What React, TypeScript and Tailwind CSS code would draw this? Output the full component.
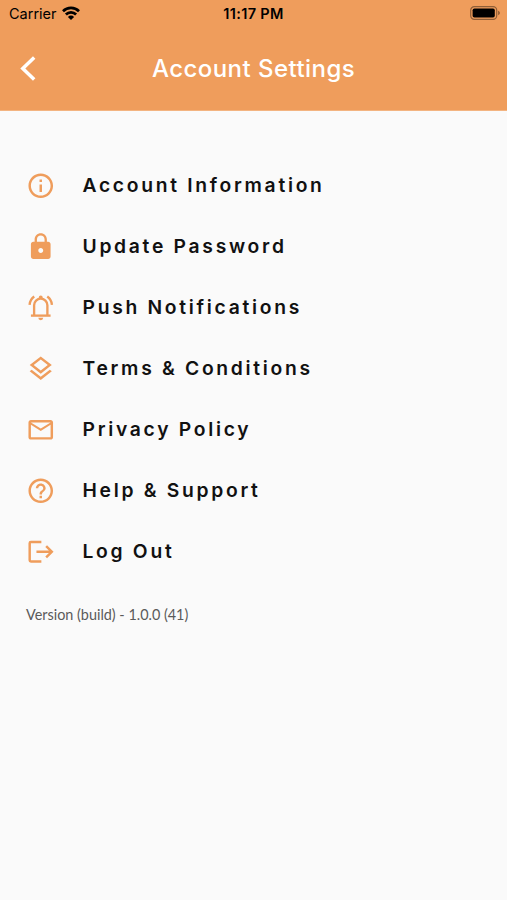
import React from 'react';
import {
    MdHelpOutline,
    MdInfoOutline,
    MdLock,
    MdMailOutline,
    MdOutlineLayers,
} from 'react-icons/md';

interface IconProps {
    size?: number | string;
    className?: string;
}

interface SettingsItem {
    label: string;
    icon: React.ComponentType<IconProps>;
}

function BellIcon({ size, className }: IconProps) {
    return (
        <svg width={size} height={size} className={className} viewBox="0 0 24 24" fill="none" stroke="currentColor" strokeWidth={1.9}>
            <path d="M6.6 18.2V10a5.4 5.4 0 0 1 10.8 0v8.2" />
            <path d="M4 18.4h16" />
            <path d="M10.4 4.8V3.7a1.6 1.6 0 0 1 3.2 0v1.1z" fill="currentColor" stroke="none" />
            <path d="M10 20.1h4a2 2 0 0 1-4 0z" fill="currentColor" stroke="none" />
            <path d="M6.7 2.9A9.2 9.2 0 0 0 2.9 9.6M17.3 2.9a9.2 9.2 0 0 1 3.8 6.7" />
        </svg>
    );
}

function LogoutIcon({ size, className }: IconProps) {
    return (
        <svg width={size} height={size} className={className} viewBox="0 0 24 24" fill="none" stroke="currentColor" strokeWidth={2}>
            <path d="M12.5 4H4a1 1 0 0 0-1 1v14a1 1 0 0 0 1 1h8.5" />
            <path d="M8.5 12h12.3M16.4 7.4 21 12l-4.6 4.6" />
        </svg>
    );
}

const items: SettingsItem[] = [
    { label: 'Account Information', icon: MdInfoOutline },
    { label: 'Update Password', icon: MdLock },
    { label: 'Push Notifications', icon: BellIcon },
    { label: 'Terms & Conditions', icon: MdOutlineLayers },
    { label: 'Privacy Policy', icon: MdMailOutline },
    { label: 'Help & Support', icon: MdHelpOutline },
    { label: 'Log Out', icon: LogoutIcon },
];

function WifiIcon() {
    return (
        <svg className="w-[18px] h-[14px] mb-[2px]" viewBox="0 0 18 14" fill="none" stroke="currentColor" strokeWidth={2.7}>
            <path d="M1 5.2a11.4 11.4 0 0 1 16 0" />
            <path d="M3.9 8.5a7.1 7.1 0 0 1 10.2 0" />
            <path d="M9 14 5.9 10.9a4.4 4.4 0 0 1 6.2 0z" fill="currentColor" stroke="none" />
        </svg>
    );
}

function BatteryIcon() {
    return (
        <svg className="w-[31px] h-[14px] mb-[1px]" viewBox="0 0 31 14">
            <rect x="0.7" y="0.7" width="26" height="12.6" rx="3.6" fill="none" stroke="#000" strokeOpacity="0.4" strokeWidth="1.2" />
            <rect x="2.6" y="2.5" width="22.2" height="9" rx="1.8" fill="#000" />
            <path d="M28.2 4.8v4.4c1-.4 1.6-1.2 1.6-2.2s-.6-1.8-1.6-2.2z" fill="#000" fillOpacity="0.45" />
        </svg>
    );
}

function StatusBar() {
    return (
        <div className="grid grid-cols-[1fr_auto_1fr] items-center h-[27px] pl-[9px] pr-[6px] text-[14.5px] leading-none text-black">
            <div className="flex items-center gap-[5px]">
                <span className="pt-px">Carrier</span>
                <WifiIcon />
            </div>
            <span className="pt-[2px] pr-[3px] font-semibold tracking-[0.35px]">11:17 PM</span>
            <div className="flex justify-end">
                <BatteryIcon />
            </div>
        </div>
    );
}

export default function App() {
    return (
        <div className="min-h-[900px] bg-[#fafafa] font-['Inter',sans-serif]">
            <header className="h-[111px] bg-[#ef9d5c] border-b border-[#f3b481]">
                <StatusBar />
                <div className="grid grid-cols-[60px_1fr_60px] items-center h-[83px]">
                    <button className="pl-[20px] text-white" aria-label="Back">
                        <svg className="w-[16px] h-[26px]" viewBox="0 0 16 26" fill="none" stroke="currentColor" strokeWidth={3.5}>
                            <path d="M14.2 1.6 2.8 12.6l11.4 11" />
                        </svg>
                    </button>
                    <h1 className="text-center text-[24px] font-medium leading-none tracking-[0.45px] text-white">Account Settings</h1>
                </div>
            </header>

            <nav className="flex flex-col pt-[44px] pl-[26px]">
                {items.map(({ label, icon: Icon }) => (
                    <button key={label} className="flex items-center gap-[27px] h-[61px] text-left">
                        <Icon size={29.5} className="text-[#ef9d5c]" />
                        <span className="text-[19.3px] font-semibold leading-none tracking-[2.7px] text-[#111111]">{label}</span>
                    </button>
                ))}
            </nav>

            <p className="mt-[23px] pl-[26px] font-['Lato',sans-serif] text-[14.4px] leading-5 text-[#5a5a5a]">Version (build) - 1.0.0 (41)</p>
        </div>
    );
}
